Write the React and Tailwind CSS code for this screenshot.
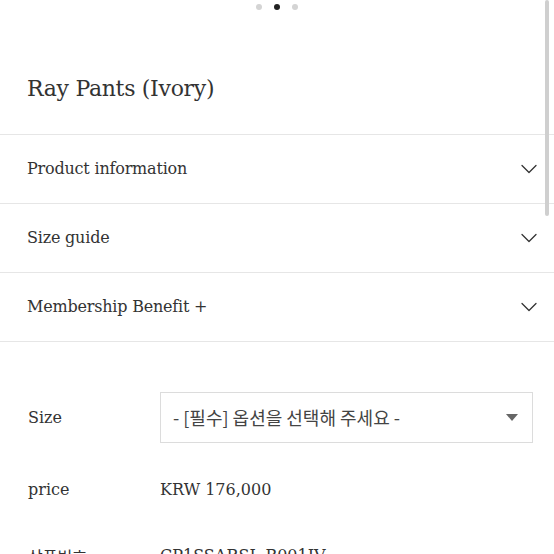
import { ChevronDown } from "lucide-react";

const serif = { fontFamily: '"DejaVu Serif", "Noto Sans CJK KR", serif' };

const sections = ["Product information", "Size guide", "Membership Benefit +"];

export default function App() {
  return (
    <div className="relative h-[554px] w-[554px] overflow-hidden bg-white text-[#333]" style={serif}>
      {/* slider dots */}
      <div className="flex justify-center gap-[12px] pt-[4px]">
        <span className="h-[6px] w-[6px] rounded-full bg-[#d4d4d4]" />
        <span className="h-[6px] w-[6px] rounded-full bg-[#222]" />
        <span className="h-[6px] w-[6px] rounded-full bg-[#d4d4d4]" />
      </div>

      {/* title */}
      <div className="flex h-[124px] items-center pl-[27px] pt-[32px]">
        <h1 className="text-[22px] font-normal tracking-[-0.3px]">Ray Pants (Ivory)</h1>
      </div>

      {/* accordion */}
      <div className="border-b border-[#e6e6e6]">
        {sections.map((s) => (
          <div key={s} className="flex h-[69px] items-center justify-between border-t border-[#e6e6e6] pl-[27px] pr-[11px]">
            <span className="text-[16px] tracking-[-0.2px]">{s}</span>
            <ChevronDown size={28} strokeWidth={1.1} className="text-[#333]" />
          </div>
        ))}
      </div>

      {/* options */}
      <div className="pl-[28px] pr-[21px] pt-[50px]">
        <div className="grid grid-cols-[132px_1fr] items-center">
          <span className="text-[16px]">Size</span>
          <div className="flex h-[51px] items-center justify-between border border-[#dcdcdc] pl-[12px] pr-[14px]">
            <span className="text-[18px] text-[#444]" style={{ fontFamily: '"Noto Sans CJK KR", sans-serif' }}>
              - [필수] 옵션을 선택해 주세요 -
            </span>
            <span className="h-0 w-0 border-x-[6px] border-t-[7px] border-x-transparent border-t-[#666]" />
          </div>
        </div>
        <div className="mt-[35px] grid grid-cols-[132px_1fr] items-center">
          <span className="text-[16px]">price</span>
          <span className="text-[16px]">KRW 176,000</span>
        </div>
        <div className="mt-[42px] grid grid-cols-[132px_1fr] items-center">
          <span className="text-[16px]" style={{ fontFamily: '"Noto Sans CJK KR", sans-serif' }}>상품번호</span>
          <span className="text-[16px]">CP1SSARSL-B001IV</span>
        </div>
      </div>

      {/* scrollbar thumb */}
      <div className="absolute right-[5px] top-0 h-[216px] w-[4px] rounded-full bg-[#cfcfcf]" />
    </div>
  );
}
